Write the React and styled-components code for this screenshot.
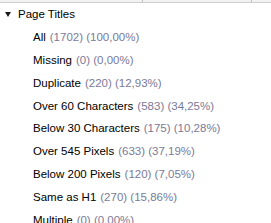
import styled, { createGlobalStyle } from "styled-components"

const Global = createGlobalStyle`
    html, body {
        margin: 0;
        padding: 0;
        background: #ffffff;
    }
`

const Painel = styled.div`
    width: 271px;
    height: 223px;
    overflow: hidden;
    background: #ffffff;
    font-family: "Liberation Sans", Arial, sans-serif;
    font-size: 11.5px;
`

const Cabecalho = styled.div`
    display: grid;
    grid-template-columns: 143px 109px 1fr;
    height: 2px;
    background: #f2f2f2;
    border-bottom: 1px solid #d0d0d0;
`

const Coluna = styled.div`
    border-right: ${(props) => (props.ultima ? "none" : "1px solid #c4c4c4")};
`

const Lista = styled.div`
    display: flex;
    flex-direction: column;
`

const Linha = styled.div`
    display: flex;
    align-items: center;
    height: 22.8px;
    padding-left: ${(props) => props.recuo}px;
    white-space: nowrap;
    color: #000000;
`

const Seta = styled.span`
    width: 0;
    height: 0;
    border-left: 3px solid transparent;
    border-right: 3px solid transparent;
    border-top: 5px solid #1a1a1a;
    margin-right: 7px;
    margin-top: 1px;
`

const Contagem = styled.span`
    color: #7a7a98;
    margin-left: 4px;
`

const itens = [
    ["All", "(1702) (100,00%)"],
    ["Missing", "(0) (0,00%)"],
    ["Duplicate", "(220) (12,93%)"],
    ["Over 60 Characters", "(583) (34,25%)"],
    ["Below 30 Characters", "(175) (10,28%)"],
    ["Over 545 Pixels", "(633) (37,19%)"],
    ["Below 200 Pixels", "(120) (7,05%)"],
    ["Same as H1", "(270) (15,86%)"],
    ["Multiple", "(0) (0,00%)"],
]

export default function App() {
    return (
        <Painel>
            <Global />
            <Cabecalho>
                <Coluna />
                <Coluna />
                <Coluna ultima />
            </Cabecalho>
            <Lista>
                <Linha recuo={5}>
                    <Seta />
                    Page Titles
                </Linha>
                {itens.map(([nome, num]) => (
                    <Linha key={nome} recuo={33}>
                        {nome}
                        <Contagem>{num}</Contagem>
                    </Linha>
                ))}
            </Lista>
        </Painel>
    )
}
